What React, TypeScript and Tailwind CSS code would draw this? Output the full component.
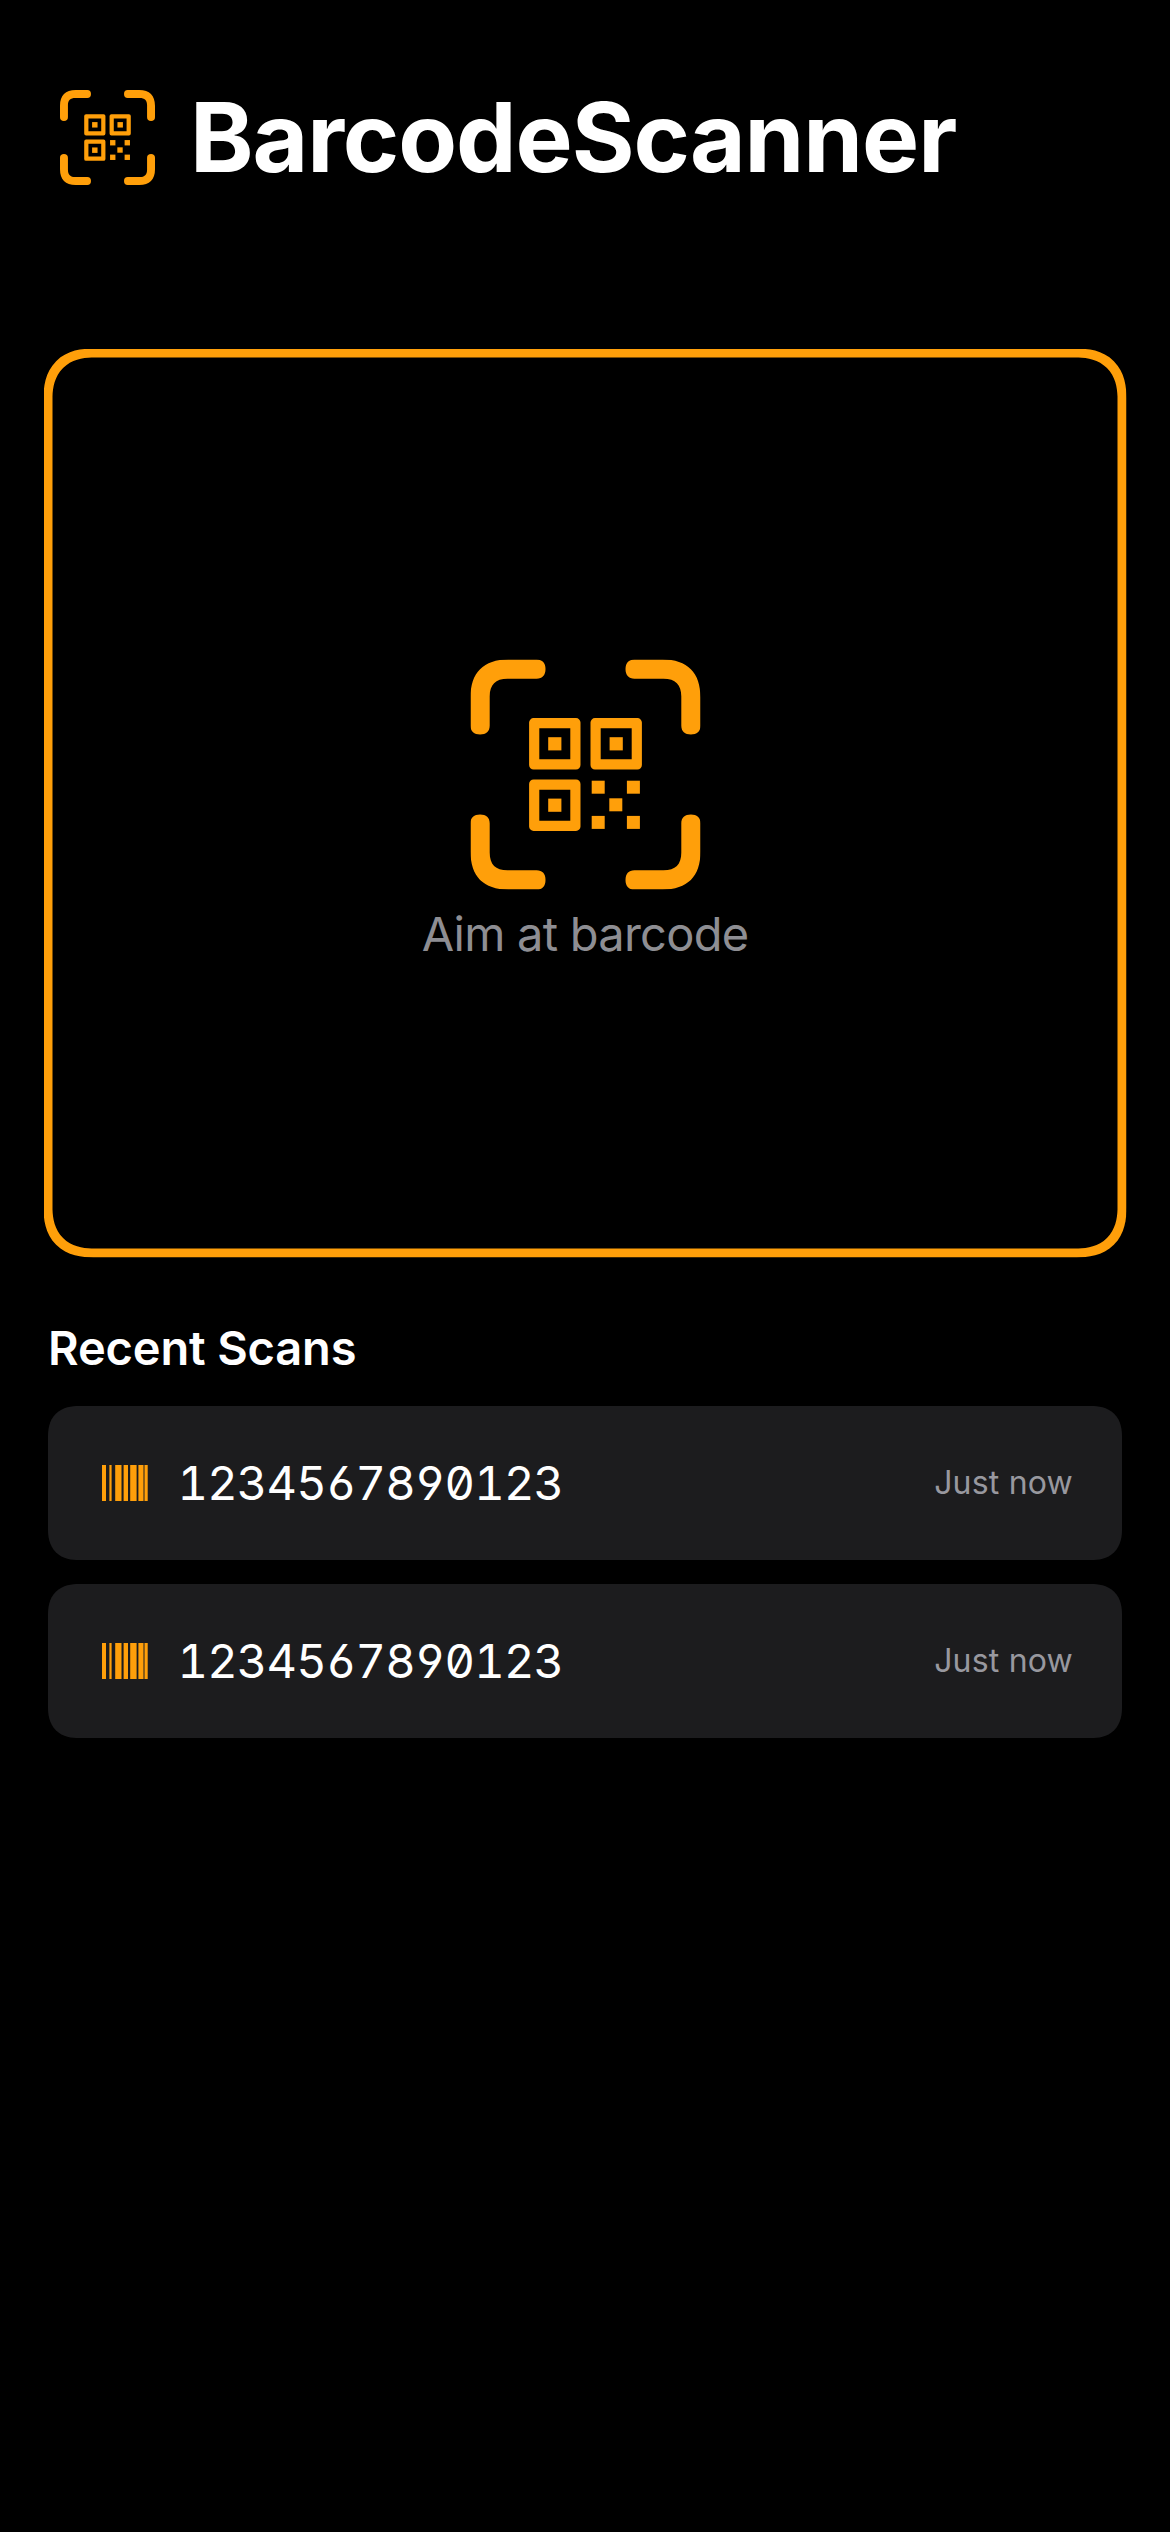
const Bracket = ({ transform }: { transform?: string }) => (
  <path
    transform={transform}
    d="M0 66V38C0 13 13 0 38 0H66C72 0 75 3.6 75 9.6C75 15.6 72 19.2 66 19.2H37C25 19.2 19.2 25 19.2 37V66C19.2 72 15.6 75 9.6 75C3.6 75 0 72 0 66Z"
  />
);

const Finder = ({ x, y }: { x: number; y: number }) => (
  <g transform={`translate(${x} ${y})`}>
    <path
      fillRule="evenodd"
      d="M4.5 0H46.9A4.5 4.5 0 0 1 51.4 4.5V46.9A4.5 4.5 0 0 1 46.9 51.4H4.5A4.5 4.5 0 0 1 0 46.9V4.5A4.5 4.5 0 0 1 4.5 0ZM10.2 10.2V41.2H41.2V10.2Z"
    />
    <rect x="19.1" y="19.1" width="13.2" height="13.2" />
  </g>
);

const modules = [
  [121.2, 121.2],
  [156.4, 121.2],
  [138.8, 138.8],
  [121.2, 156.4],
  [156.4, 156.4],
];

const ScanIcon = ({ className }: { className: string }) => (
  <svg viewBox="0 0 230 230" className={className} fill="currentColor">
    <Bracket />
    <Bracket transform="translate(230 0) scale(-1 1)" />
    <Bracket transform="translate(0 230) scale(1 -1)" />
    <Bracket transform="translate(230 230) scale(-1 -1)" />
    <Finder x={58.6} y={58.6} />
    <Finder x={120} y={58.6} />
    <Finder x={58.6} y={120} />
    {modules.map(([x, y]) => (
      <rect key={`${x}-${y}`} x={x} y={y} width="13" height="13" />
    ))}
  </svg>
);

// [x, width] of each bar
const bars = [
  [0, 4],
  [7.4, 2.2],
  [13.2, 6.3],
  [21.6, 4.4],
  [28.2, 6.4],
  [36.4, 5.1],
  [42.5, 3.2],
];

const BarcodeIcon = () => (
  <svg viewBox="0 0 46 36" className="h-9 w-[46px] text-[#ff9f0a]" fill="currentColor">
    {bars.map(([x, width]) => (
      <rect key={x} x={x} width={width} height="36" />
    ))}
  </svg>
);

const ScanRow = ({ code, time }: { code: string; time: string }) => (
  <li className="flex h-[154px] items-center rounded-[31px] bg-[#1c1c1e] pr-[49px] pl-[54px] [corner-shape:superellipse(1.25)]">
    <BarcodeIcon />
    <span className="ml-[29.5px] text-[47px] leading-[58px] tracking-[-0.8px] [font-feature-settings:'tnum','zero','cv03','cv04']">
      {code}
    </span>
    <span className="ml-auto text-[32px] leading-10 tracking-[0.2px] text-[#98989f]">{time}</span>
  </li>
);

const scans = [
  { id: 1, code: '1234567890123', time: 'Just now' },
  { id: 2, code: '1234567890123', time: 'Just now' },
];

export default function App() {
  return (
    <div className="flex h-[2532px] w-[1170px] flex-col bg-black px-12 font-['Inter',sans-serif] text-white">
      <header className="flex items-center pt-[90px] pl-3">
        <ScanIcon className="size-[95px] text-[#ff9f0a]" />
        <h1 className="ml-[35px] text-[96px] leading-[95px] font-bold tracking-[-1.05px]">BarcodeScanner</h1>
      </header>
      <section className="-mx-[5px] mt-[163px] flex h-[909px] w-[1083px] translate-[0.5px] flex-col items-center rounded-[50px] border-9 border-[#ff9f0a] pt-[301.5px] [corner-shape:superellipse(1.25)]">
        <ScanIcon className="size-[230px] text-[#ff9f0a]" />
        <p className="mt-[15px] text-[47px] leading-[58px] tracking-[-0.75px] text-[#8e8e93]">Aim at barcode</p>
      </section>
      <h2 className="mt-[62px] text-[47px] leading-[58px] font-semibold tracking-[-0.15px]">Recent Scans</h2>
      <ul className="mt-[29px] flex flex-col gap-6">
        {scans.map((scan) => (
          <ScanRow key={scan.id} code={scan.code} time={scan.time} />
        ))}
      </ul>
    </div>
  );
}
